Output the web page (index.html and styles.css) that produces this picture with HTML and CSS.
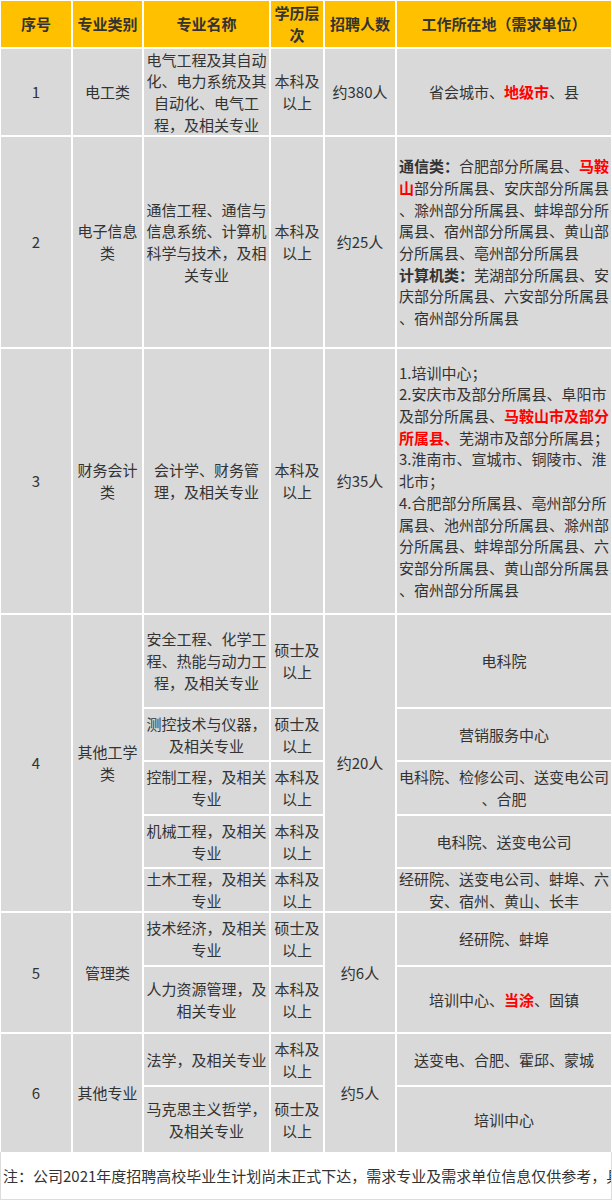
FILE: index.html
```html
<!DOCTYPE html>
<html lang="zh-CN">
<head>
<meta charset="utf-8">
<title>招聘计划</title>
<link rel="stylesheet" href="styles.css">
</head>
<body>
<div class="sheet">
  <div class="table">
    <div class="th">序号</div>
    <div class="th">专业类别</div>
    <div class="th">专业名称</div>
    <div class="th">学历层<br>次</div>
    <div class="th">招聘人数</div>
    <div class="th">工作所在地（需求单位）</div>

    <div class="td">1</div>
    <div class="td">电工类</div>
    <div class="td">电气工程及其自动<br>化、电力系统及其<br>自动化、电气工<br>程，及相关专业</div>
    <div class="td">本科及<br>以上</div>
    <div class="td">约380人</div>
    <div class="td">省会城市、<span class="red">地级市</span>、县</div>

    <div class="td">2</div>
    <div class="td">电子信息<br>类</div>
    <div class="td">通信工程、通信与<br>信息系统、计算机<br>科学与技术，及相<br>关专业</div>
    <div class="td">本科及<br>以上</div>
    <div class="td">约25人</div>
    <div class="td left"><p><b>通信类：</b>合肥部分所属县、<span class="red">马鞍<br>山</span>部分所属县、安庆部分所属县<br>、滁州部分所属县、蚌埠部分所<br>属县、宿州部分所属县、黄山部<br>分所属县、亳州部分所属县<br><b>计算机类：</b>芜湖部分所属县、安<br>庆部分所属县、六安部分所属县<br>、宿州部分所属县</p></div>

    <div class="td">3</div>
    <div class="td">财务会计<br>类</div>
    <div class="td">会计学、财务管<br>理，及相关专业</div>
    <div class="td">本科及<br>以上</div>
    <div class="td">约35人</div>
    <div class="td left"><p>1.培训中心；<br>2.安庆市及部分所属县、阜阳市<br>及部分所属县、<span class="red">马鞍山市及部分<br>所属县、</span>芜湖市及部分所属县；<br>3.淮南市、宣城市、铜陵市、淮<br>北市；<br>4.合肥部分所属县、亳州部分所<br>属县、池州部分所属县、滁州部<br>分所属县、蚌埠部分所属县、六<br>安部分所属县、黄山部分所属县<br>、宿州部分所属县</p></div>

    <div class="td span5">4</div>
    <div class="td span5">其他工学<br>类</div>
    <div class="td">安全工程、化学工<br>程、热能与动力工<br>程，及相关专业</div>
    <div class="td">硕士及<br>以上</div>
    <div class="td span5">约20人</div>
    <div class="td">电科院</div>

    <div class="td">测控技术与仪器，<br>及相关专业</div>
    <div class="td">硕士及<br>以上</div>
    <div class="td">营销服务中心</div>

    <div class="td">控制工程，及相关<br>专业</div>
    <div class="td">本科及<br>以上</div>
    <div class="td">电科院、检修公司、送变电公司<br>、合肥</div>

    <div class="td">机械工程，及相关<br>专业</div>
    <div class="td">本科及<br>以上</div>
    <div class="td">电科院、送变电公司</div>

    <div class="td">土木工程，及相关<br>专业</div>
    <div class="td">本科及<br>以上</div>
    <div class="td">经研院、送变电公司、蚌埠、六<br>安、宿州、黄山、长丰</div>

    <div class="td span2">5</div>
    <div class="td span2">管理类</div>
    <div class="td">技术经济，及相关<br>专业</div>
    <div class="td">硕士及<br>以上</div>
    <div class="td span2">约6人</div>
    <div class="td">经研院、蚌埠</div>

    <div class="td">人力资源管理，及<br>相关专业</div>
    <div class="td">本科及<br>以上</div>
    <div class="td">培训中心、<span class="red">当涂</span>、固镇</div>

    <div class="td span2">6</div>
    <div class="td span2">其他专业</div>
    <div class="td">法学，及相关专业</div>
    <div class="td">本科及<br>以上</div>
    <div class="td span2">约5人</div>
    <div class="td">送变电、合肥、霍邱、蒙城</div>

    <div class="td">马克思主义哲学，<br>及相关专业</div>
    <div class="td">硕士及<br>以上</div>
    <div class="td">培训中心</div>
  </div>
  <div class="note">注：公司2021年度招聘高校毕业生计划尚未正式下达，需求专业及需求单位信息仅供参考，具体以正式发布为准。</div>
</div>
</body>
</html>
```

FILE: styles.css
```css
html, body {
  margin: 0;
  padding: 0;
  background: #ffffff;
}

body {
  font-family: "Noto Sans CJK SC", "Noto Sans", sans-serif;
  font-size: 15px;
  line-height: 21.7px;
  color: #333333;
}

.sheet {
  width: 612px;
}

.table {
  display: grid;
  grid-template-columns: 70px 69px 125px 52px 70px 214px;
  grid-template-rows: 46px 86px 210px 264px 92px 51px 52px 51px 42px 52px 65px 51px 65px;
  gap: 2px;
  padding: 1px 0 0 1px;
  background: #ffffff;
}

.th,
.td {
  display: flex;
  align-items: center;
  justify-content: center;
  text-align: center;
  padding: 0 2px;
  white-space: nowrap;
}

.th {
  background: #ffc000;
  font-weight: bold;
  color: #333333;
}

.td {
  background: #d9d9d9;
}

.td.left {
  justify-content: flex-start;
  text-align: left;
}

.td.left p {
  margin: 0;
}

.td b {
  font-weight: bold;
}

.span5 {
  grid-row: span 5;
}

.span2 {
  grid-row: span 2;
}

.red {
  color: #ff0000;
  font-weight: bold;
}

.note {
  height: 47px;
  border: 1px solid #dcdcdc;
  border-top: none;
  display: flex;
  align-items: center;
  padding-left: 2px;
  white-space: nowrap;
  overflow: hidden;
  color: #333333;
}
```
